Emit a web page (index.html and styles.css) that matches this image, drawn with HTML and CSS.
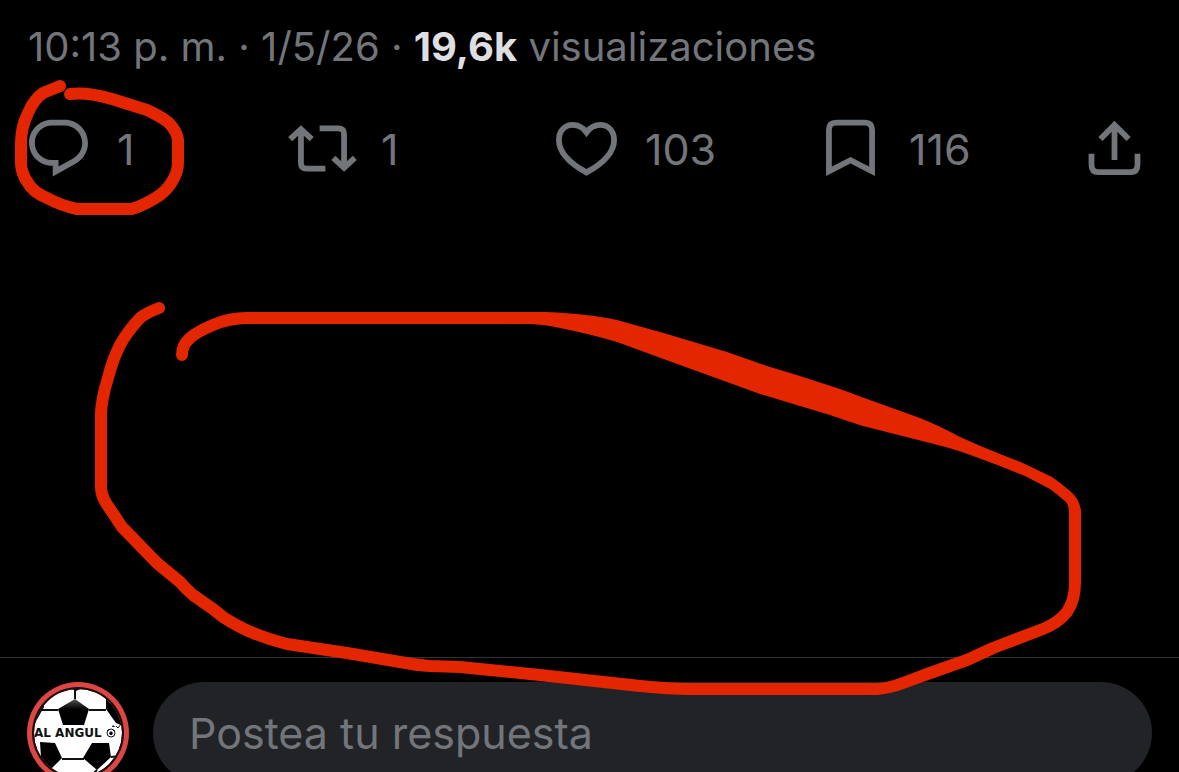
FILE: index.html
```html
<!DOCTYPE html>
<html lang="es">
<head>
<meta charset="utf-8">
<meta name="viewport" content="width=device-width, initial-scale=1">
<title>Post</title>
<link rel="stylesheet" href="styles.css">
</head>
<body>
<main class="post">
  <p class="meta"><time>10:13 p. m. · 1/5/26</time> · <strong class="views">19,6k</strong> visualizaciones</p>
  <div class="actions">
    <button class="action" type="button" aria-label="Responder">
      <svg class="icon" viewBox="0 0 24 24"><path d="M1.751 10c0-4.42 3.584-8 8.005-8h4.366c4.49 0 8.129 3.64 8.129 8.13 0 2.96-1.607 5.68-4.196 7.11l-8.054 4.46v-3.69h-.067c-4.49.1-8.183-3.51-8.183-8.01zm8.005-6c-3.317 0-6.005 2.69-6.005 6 0 3.37 2.77 6.08 6.138 6.01l.351-.01h1.761v2.3l5.087-2.81c1.951-1.08 3.163-3.13 3.163-5.36 0-3.39-2.744-6.13-6.129-6.13H9.756z"/></svg>
      <span>1</span>
    </button>
    <button class="action" type="button" aria-label="Repostear">
      <svg class="icon" viewBox="0 0 24 24"><path d="M4.5 3.88l4.432 4.14-1.364 1.46L5.5 7.55V17q0 1 1 1H13v2H6.5q-3 0-3-3V7.55L1.432 9.48.068 8.02 4.5 3.88zM17.500 6H11V4h6.500q3 0 3 3v9.450l2.068-1.930 1.364 1.460-4.432 4.140-4.432-4.140 1.364-1.460 2.068 1.930V7q0-1-1-1z"/></svg>
      <span>1</span>
    </button>
    <button class="action" type="button" aria-label="Me gusta">
      <svg class="icon line" viewBox="0 0 24 24"><path d="M12 6.400C10.800 4.800 9 3.800 7.200 3.800 4.400 3.800 2.400 6 2.400 9c0 4.300 3.600 8 9.600 11.300 6-3.300 9.600-7 9.600-11.300 0-3-2-5.200-4.800-5.200-1.800 0-3.600 1-4.800 2.600z"/></svg>
      <span>103</span>
    </button>
    <button class="action" type="button" aria-label="Guardar">
      <svg class="icon line" viewBox="0 0 24 24"><path d="M4.500 19.900V5.500q0-2.500 2.500-2.500h10q2.500 0 2.500 2.500v14.400L12 16.100z"/></svg>
      <span>116</span>
    </button>
    <button class="action" type="button" aria-label="Compartir">
      <svg class="icon line" viewBox="0 0 24 24"><path d="M4 13.800v3.900q0 2.500 2.500 2.500h11q2.500 0 2.500-2.500v-3.900M12 16V4M7.100 8.700 12 3.800l4.900 4.900"/></svg>
    </button>
  </div>
</main>
<form class="reply">
  <svg class="avatar" viewBox="0 0 102 102" role="img" aria-label="Al Angulo">
    <defs>
      <clipPath id="ball"><circle cx="51" cy="51" r="44"/></clipPath>
      <linearGradient id="shine" x2="0" y2="1"><stop stop-color="#555"/><stop offset=".4" stop-color="#000"/></linearGradient>
    </defs>
    <circle cx="51" cy="51" r="51" fill="#dc4644"/>
    <circle cx="51" cy="51" r="46" fill="#210a0a"/>
    <g clip-path="url(#ball)">
      <circle cx="51" cy="51" r="44" fill="#fff"/>
      <path d="M48 17V6M62 28h17M31 28H15M35 77h22M23 88l14 14M70 88l-14 14M84 75l9-1M14 76l-5-4" stroke="#111" stroke-width="2" fill="none"/>
      <path d="M48 17 62 27l-5 16H36l-5-16z" fill="url(#shine)"/>
      <path d="M40 5h18L49 9zM79 14v13l10 14 10 4V20L82 10zM17 18v7L8 41 2 40 8 20zM13 60l15 1 7 15-12 12-9-12zM65 61h17l2 14-14 13-14-12zM5 76l26 24H5zM95 78 74 100h20z"/>
      <text class="avatar-name" x="7" y="55">AL ANGUL</text>
      <circle cx="84" cy="51" r="4" fill="#fff" stroke="#111" stroke-width="1"/>
      <path d="m84 49 2 2-1 2h-2l-1-2zM85 45l1-2 2 2zM80 54l2 2M86 55l2-2"/>
      <path d="m80 49 2-1M88 50l-2-2M89 44l2 2 3-4" fill="none" stroke="#111"/>
    </g>
  </svg>
  <input class="field" type="text" placeholder="Postea tu respuesta" aria-label="Postea tu respuesta">
</form>
<svg class="marks" viewBox="0 0 1179 772" aria-hidden="true">
  <path class="pen" d="M60 86 43 93Q34 99 28 113 21 127 21 143V163Q21 173 28 183 33 192 47 198 62 206 77 209H132Q147 204 160 195 168 189 173 180 178 172 178 162V140Q177 131 168 122 160 116 147 110L112 99Q88 92 70 94"/>
  <path class="pen" d="M159 308Q146 313 140 318 127 332 120 345 112 361 108 378 101 400 101 415V487Q101 495 106 503L122 527 157 563 180 582Q186 589 193 595L213 609 223 617Q250 635 287 644L347 653 400 662Q415 665 430 666L460 667 540 675 640 686Q670 689 690 689H877Q890 688 903 683L930 673 967 660 993 648 1043 629Q1058 623 1067 612 1075 600 1075 583V511"/>
  <path class="pen" d="M182 355Q182 346 188 340 194 333 213 325 229 318 247 318H530"/>
  <path class="swash" d="M525 312H546Q590 314 617 320 L667 334 727 352Q747 359 767 366L800 376 840 389 867 399 920 418Q942 427 960 437 980 446 1000 454 1013 459 1025 464L1052 477Q1062 484 1070 491 1081 500 1081 514H1069Q1069 505 1066 502 1058 495 1050 489L1025 476 1000 466 965 453Q947 447 930 443L863 426Q847 421 830 415L800 406 760 394 727 382 680 365 617 342Q590 334 560 328 542 324 525 324z"/>
</svg>
</body>
</html>
```
FILE: styles.css
```css
* {
  box-sizing: border-box;
}

body {
  margin: 0;
  min-height: 100vh;
  overflow: hidden;
  position: relative;
  background: #000;
  color: #72767a;
  font-family: Inter, "Liberation Sans", sans-serif;
  font-size: 43px;
}

.post {
  min-height: 657px;
  padding: 20px 30px 0 24px;
}

.meta {
  margin: 0;
  padding-left: 4px;
  font-size: 40px;
  line-height: 54px;
  white-space: nowrap;
}

.views {
  color: #dedfe0;
  font-weight: 700;
}

.actions {
  display: grid;
  grid-template-columns: repeat(4, 1fr) auto;
  margin-top: 40px;
}

.action {
  display: flex;
  align-items: center;
  gap: 24px;
  padding: 0;
  border: 0;
  background: none;
  color: inherit;
  font: inherit;
}

.icon {
  flex: none;
  width: 69px;
  height: 69px;
  fill: currentColor;
}

.line {
  fill: none;
  stroke: currentColor;
  stroke-width: 2;
}

.reply {
  display: flex;
  gap: 24px;
  padding: 24px 27px;
  border-top: 1px solid #2f3336;
}

.avatar {
  flex: none;
  width: 102px;
  height: 102px;
}

.avatar-name {
  font: bold 12px "DejaVu Sans", sans-serif;
  fill: #111;
}

.field {
  flex: 1;
  min-width: 0;
  height: 102px;
  padding: 0 36px;
  border: 0;
  border-radius: 51px;
  outline: 0;
  background: #212327;
  color: #e7e9ea;
  font: inherit;
}

.field::placeholder {
  color: #72767a;
  opacity: 1;
}

.marks {
  position: absolute;
  top: 0;
  left: 0;
  width: 100%;
  pointer-events: none;
}

.pen {
  fill: none;
  stroke: #e42600;
  stroke-width: 12;
  stroke-linecap: round;
  stroke-linejoin: round;
}

.swash {
  fill: #e42600;
}
```
